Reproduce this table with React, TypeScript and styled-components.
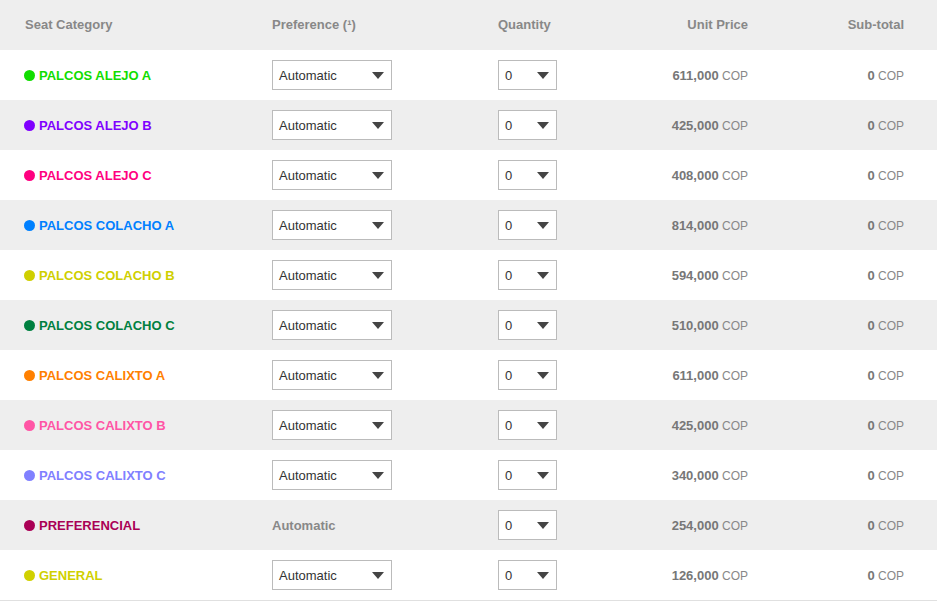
import React, { FC } from 'react';
import styled, { createGlobalStyle } from 'styled-components';

const GlobalStyle = createGlobalStyle`
  html, body {
    margin: 0;
    padding: 0;
    background: #ffffff;
  }
  body {
    font-family: 'Liberation Sans', Arial, sans-serif;
    font-size: 13px;
  }
`;

const Table = styled.div`
  width: 937px;
  border-bottom: 1px solid #e0e0e0;
`;

const Row = styled.div<{ $striped?: boolean }>`
  display: grid;
  grid-template-columns: 247px 226px 100px 150px 156px;
  align-items: center;
  height: 50px;
  padding: 0 33px 0 25px;
  box-sizing: border-box;
  background-color: ${p => (p.$striped ? '#eeeeee' : '#ffffff')};
`;

const HeadRow = styled(Row)`
  padding-bottom: 2px;
`;

const HeadCell = styled.div<{ $right?: boolean }>`
  font-weight: bold;
  color: #888888;
  text-align: ${p => (p.$right ? 'right' : 'left')};
`;

const Category = styled.div<{ $color: string }>`
  display: flex;
  align-items: center;
  gap: 4px;
  margin-left: -1px;
  font-weight: bold;
  text-transform: uppercase;
  color: ${p => p.$color};
`;

const Dot = styled.span<{ $color: string }>`
  width: 11px;
  height: 11px;
  border-radius: 50%;
  background-color: ${p => p.$color};
`;

const Select = styled.div<{ $width: number }>`
  display: flex;
  align-items: center;
  justify-content: space-between;
  box-sizing: border-box;
  width: ${p => p.$width}px;
  height: 30px;
  padding: 0 7px 0 6px;
  border: 1px solid #bbbbbb;
  background-color: #ffffff;
  color: #333333;
`;

const Caret = styled.span`
  width: 0;
  height: 0;
  border-left: 6px solid transparent;
  border-right: 6px solid transparent;
  border-top: 7px solid #444444;
`;

const FixedText = styled.div`
  font-weight: bold;
  color: #888888;
`;

const Amount = styled.div`
  text-align: right;
  color: #888888;
  font-size: 12px;
  b {
    font-size: 13px;
    color: #777777;
  }
`;

type Seat = {
  name: string;
  color: string;
  price: string;
  fixed?: boolean;
};

const seats: Seat[] = [
  { name: 'Palcos Alejo A', color: '#11dd00', price: '611,000' },
  { name: 'Palcos Alejo B', color: '#8000ff', price: '425,000' },
  { name: 'Palcos Alejo C', color: '#ff0080', price: '408,000' },
  { name: 'Palcos Colacho A', color: '#0080ff', price: '814,000' },
  { name: 'Palcos Colacho B', color: '#cfcf00', price: '594,000' },
  { name: 'Palcos Colacho C', color: '#008040', price: '510,000' },
  { name: 'Palcos Calixto A', color: '#ff8000', price: '611,000' },
  { name: 'Palcos Calixto B', color: '#ff55a5', price: '425,000' },
  { name: 'Palcos Calixto C', color: '#8080ff', price: '340,000' },
  { name: 'Preferencial', color: '#aa0055', price: '254,000', fixed: true },
  { name: 'General', color: '#d0d000', price: '126,000' },
];

const App: FC = () => (
  <>
    <GlobalStyle />
    <Table>
      <HeadRow $striped>
        <HeadCell>Seat Category</HeadCell>
        <HeadCell>Preference (¹)</HeadCell>
        <HeadCell>Quantity</HeadCell>
        <HeadCell $right>Unit Price</HeadCell>
        <HeadCell $right>Sub-total</HeadCell>
      </HeadRow>
      {seats.map((seat, i) => (
        <Row key={seat.name} $striped={i % 2 === 1}>
          <Category $color={seat.color}>
            <Dot $color={seat.color} />
            {seat.name}
          </Category>
          <div>
            {seat.fixed ? (
              <FixedText>Automatic</FixedText>
            ) : (
              <Select $width={120}>
                Automatic
                <Caret />
              </Select>
            )}
          </div>
          <div>
            <Select $width={59}>
              0
              <Caret />
            </Select>
          </div>
          <Amount>
            <b>{seat.price}</b> COP
          </Amount>
          <Amount>
            <b>0</b> COP
          </Amount>
        </Row>
      ))}
    </Table>
  </>
);

export default App;
